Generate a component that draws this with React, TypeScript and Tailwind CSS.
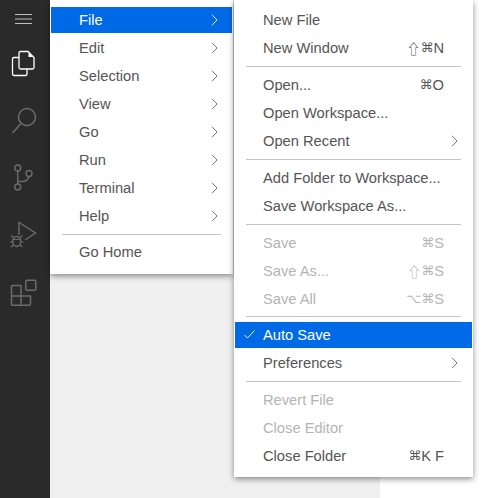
const font = "font-['Liberation_Sans',Arial,sans-serif]";

function Chevron({ color = "#555" }: { color?: string }) {
  return (
    <svg width="7" height="12" viewBox="0 0 7 12" fill="none" className="shrink-0">
      <path d="M1 0.800l5 5.200-5 5.200" stroke={color} strokeWidth="0.9" />
    </svg>
  );
}

type Item = { label?: string; shift?: boolean; sym?: string; key?: string; sub?: boolean; dim?: boolean; active?: boolean; check?: boolean; sep?: boolean; tight?: string };

function Row({ item, pl }: { item: Item; pl: string }) {
  const text = item.active ? "text-white" : item.dim ? "text-[#b4b4b4]" : "text-[#555555]";
  return (
    <div className={`relative flex h-[26px] shrink-0 my-px mx-px items-center justify-between ${pl} ${item.sub ? "pr-[14px]" : "pr-[28px]"} ${text} ${item.active ? "bg-[#0069e5]" : ""}`}>
      {item.check && (
        <svg width="11" height="9" viewBox="0 0 11 9" fill="none" className="absolute left-[9px] top-[8px]">
          <path d="M0.5 5l3 3 7-7.500" stroke="#ffffff" strokeWidth="0.9" />
        </svg>
      )}
      <span>{item.label}</span>
      {(item.sym || item.key) && (
        <span className="flex items-center">
          {item.shift && <span className="font-['Noto_Sans_CJK_JP',sans-serif] text-[14px] leading-none">⇧</span>}
          {item.sym && <span className="font-['DejaVu_Sans',sans-serif] text-[13px]">{item.sym}</span>}
          {item.key && <span>{item.key}</span>}
        </span>
      )}
      {item.sub && <Chevron color={item.active ? "#ffffff" : "#666666"} />}
    </div>
  );
}

function Menu({ items, className, pl, sepx }: { items: Item[]; className: string; pl: string; sepx: string }) {
  return (
    <div className={`absolute top-0 flex flex-col bg-white pt-[6px] text-[14.7px] shadow-[0_2px_6px_rgba(0,0,0,0.45)] ${className}`}>
      {items.map((it, i) =>
        it.sep ? (
          <div key={i} className={`h-px shrink-0 bg-[#c4c4c4] ${it.tight ?? "my-1"} ${sepx}`} />
        ) : (
          <Row key={i} item={it} pl={pl} />
        ),
      )}
    </div>
  );
}

const main: Item[] = [
  { label: "File", sub: true, active: true },
  { label: "Edit", sub: true },
  { label: "Selection", sub: true },
  { label: "View", sub: true },
  { label: "Go", sub: true },
  { label: "Run", sub: true },
  { label: "Terminal", sub: true },
  { label: "Help", sub: true },
  { sep: true, tight: "mt-1 mb-[3px]" },
  { label: "Go Home" },
];

const file: Item[] = [
  { label: "New File" },
  { label: "New Window", shift: true, sym: "⌘", key: "N" },
  { sep: true },
  { label: "Open...", sym: "⌘", key: "O" },
  { label: "Open Workspace..." },
  { label: "Open Recent", sub: true },
  { sep: true },
  { label: "Add Folder to Workspace..." },
  { label: "Save Workspace As..." },
  { sep: true },
  { label: "Save", sym: "⌘", key: "S", dim: true },
  { label: "Save As...", shift: true, sym: "⌘", key: "S", dim: true },
  { label: "Save All", sym: "⌥⌘", key: "S", dim: true },
  { sep: true, tight: "mt-[3px] mb-1" },
  { label: "Auto Save", active: true, check: true },
  { label: "Preferences", sub: true },
  { sep: true },
  { label: "Revert File", dim: true },
  { label: "Close Editor", dim: true },
  { label: "Close Folder", sym: "⌘", key: "K F" },
];

function ActivityBar() {
  const dim = "#6c6c6c";
  return (
    <div className="flex h-full w-[50px] shrink-0 flex-col bg-[#2a2a2a]">
      <svg width="50" height="20" viewBox="0 0 50 20" fill="none" className="mt-[10px]">
        <path d="M15 4.500h17M15 9h17M15 13.500h17" stroke="#c0c0c0" strokeWidth="1.200" />
      </svg>
      <svg width="50" height="34" viewBox="0 0 50 34" fill="none" className="mt-[16px]">
        <path d="M19 11.500H14a1.500 1.500 0 0 0-1.500 1.500V28a1.500 1.500 0 0 0 1.500 1.500H25.500a1.500 1.500 0 0 0 1.500-1.500V23" stroke="#ffffff" strokeWidth="1.300" />
        <path d="M20.500 5.500H28L34 11.500V21.500a1.500 1.500 0 0 1-1.500 1.500H20.500A1.500 1.500 0 0 1 19 21.500V7A1.500 1.500 0 0 1 20.500 5.500z" stroke="#ffffff" strokeWidth="1.300" />
        <path d="M28.500 6.500V11h4.500z" fill="#ffffff" />
      </svg>
      <svg width="50" height="32" viewBox="0 0 50 32" fill="none" className="mt-[25px]">
        <circle cx="27" cy="12" r="8.500" stroke={dim} strokeWidth="1.500" />
        <path d="M21 18.500L12.500 28" stroke={dim} strokeWidth="1.600" />
      </svg>
      <svg width="50" height="32" viewBox="0 0 50 32" fill="none" className="mt-[25px]">
        <circle cx="17.700" cy="6" r="3" stroke={dim} strokeWidth="1.400" />
        <circle cx="17.700" cy="25" r="3" stroke={dim} strokeWidth="1.400" />
        <circle cx="29" cy="11.500" r="3" stroke={dim} strokeWidth="1.400" />
        <path d="M17.700 9V22M17.700 19.500H22C25 19.500 28 18 29 14.500" stroke={dim} strokeWidth="1.400" />
      </svg>
      <svg width="50" height="32" viewBox="0 0 50 32" fill="none" className="mt-[24px]">
        <path d="M19 17V4.500L35.500 15 25 22" stroke={dim} strokeWidth="1.400" />
        <ellipse cx="16.700" cy="23.500" rx="4" ry="5" stroke={dim} strokeWidth="1.400" />
        <path d="M13 21.500h7.500M10 24h3M20.500 24h3M11 17.500l3 2.500M22.500 17.500l-3 2.500M11 29l3-2.500M22.500 29l-3-2.500" stroke={dim} strokeWidth="1.200" />
      </svg>
      <svg width="50" height="32" viewBox="0 0 50 32" fill="none" className="mt-[28px]">
        <path d="M11.500 8.200A1 1 0 0 1 12.500 7.500H21V27.200H12.500A1 1 0 0 1 11.500 26.200zM11.500 18H30.500V26.200A1 1 0 0 1 29.500 27.200H21" stroke={dim} strokeWidth="1.500" />
        <rect x="25.800" y="2.300" width="10" height="10" rx="1" stroke={dim} strokeWidth="1.500" />
      </svg>
    </div>
  );
}

export default function App() {
  return (
    <div className={`relative flex h-[498px] w-[497px] overflow-hidden bg-white ${font}`}>
      <ActivityBar />
      <div className="h-full w-[330px] bg-[#f0f0f0]" />
      <Menu items={main} className="left-[50px] w-[183px] pb-[8px]" pl="pl-[28px]" sepx="mx-[12px]" />
      <Menu items={file} className="left-[234px] w-[239px] pb-[7px]" pl="pl-[28px]" sepx="mx-[12px]" />
    </div>
  );
}
